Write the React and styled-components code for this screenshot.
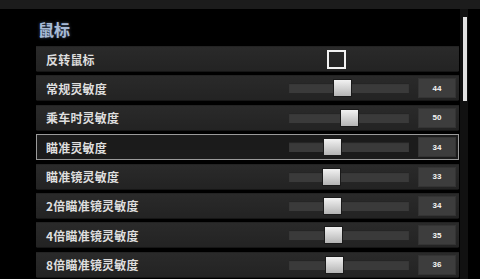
import React from "react";
import styled, { createGlobalStyle } from "styled-components";

const settings = [
  { label: "反转鼠标", type: "check" },
  { label: "常规灵敏度", value: 44 },
  { label: "乘车时灵敏度", value: 50 },
  { label: "瞄准灵敏度", value: 34, selected: true },
  { label: "瞄准镜灵敏度", value: 33 },
  { label: "2倍瞄准镜灵敏度", value: 34 },
  { label: "4倍瞄准镜灵敏度", value: 35 },
  { label: "8倍瞄准镜灵敏度", value: 36 },
];

const App = () => {
  return (
    <>
      <GlobalStyle />
      <TopBar />
      <Main>
        <Content>
          <Title>鼠标</Title>
          <List>
            {settings.map((s) => (
              <Row key={s.label} $selected={s.selected}>
                <Label>{s.label}</Label>
                {s.type === "check" ? (
                  <CheckArea>
                    <CheckBox />
                  </CheckArea>
                ) : (
                  <SliderArea>
                    <Track>
                      <Thumb style={{ left: `${(s.value / 100) * 101}px` }} />
                    </Track>
                    <ValueBox>{s.value}</ValueBox>
                  </SliderArea>
                )}
              </Row>
            ))}
          </List>
        </Content>
        <ScrollTrack>
          <ScrollThumb />
        </ScrollTrack>
      </Main>
    </>
  );
};

export default App;

const GlobalStyle = createGlobalStyle`
  html, body {
    margin: 0;
    padding: 0;
    background: #000;
    overflow: hidden;
    font-family: "Noto Sans CJK SC", "Liberation Sans", sans-serif;
  }
`;

const TopBar = styled.div`
  height: 9px;
  background: #1c1c1c;
`;

const Main = styled.div`
  display: flex;
  padding-left: 36px;
`;

const Content = styled.div`
  width: 423px;
`;

const Title = styled.div`
  padding-top: 10px;
  padding-left: 2px;
  height: 27px;
  line-height: 20px;
  font-size: 16px;
  font-weight: 700;
  color: #a8bbd6;
  text-shadow: 0 0 3px rgba(120, 150, 200, 0.6);
`;

const List = styled.div`
  display: flex;
  flex-direction: column;
  gap: 3.4px;
`;

const Row = styled.div`
  box-sizing: border-box;
  height: 26px;
  display: flex;
  align-items: center;
  padding-left: 9px;
  background: ${(p) =>
    p.$selected ? "#1b1b1b" : "linear-gradient(#2a2a2a, #232323)"};
  border: 1px solid ${(p) => (p.$selected ? "#9a9a9a" : "transparent")};
  border-bottom-color: ${(p) => (p.$selected ? "#9a9a9a" : "#161616")};
`;

const Label = styled.div`
  flex: 1;
  font-size: 12px;
  font-weight: 700;
  color: #dedede;
  letter-spacing: 0.2px;
`;

const CheckArea = styled.div`
  width: 167px;
  margin-right: 3px;
  padding-left: 39px;
  box-sizing: border-box;
`;

const CheckBox = styled.div`
  width: 19px;
  height: 19px;
  box-sizing: border-box;
  border: 2px solid #f2f2f2;
`;

const SliderArea = styled.div`
  display: flex;
  align-items: center;
  gap: 9px;
  margin-right: 2px;
`;

const Track = styled.div`
  position: relative;
  width: 120px;
  height: 10px;
  background: #3a3a3a;
  box-shadow: inset 0 1px 1px rgba(0, 0, 0, 0.4);
`;

const Thumb = styled.div`
  position: absolute;
  top: -4px;
  width: 19px;
  height: 18px;
  box-sizing: border-box;
  background: linear-gradient(#f2f2f2, #b4b4b4);
  border: 1px solid #1a1a1a;
`;

const ValueBox = styled.div`
  width: 38px;
  height: 20px;
  background: #3d3d3d;
  border: 1px solid #343434;
  box-sizing: border-box;
  display: flex;
  align-items: center;
  justify-content: center;
  font-family: "Liberation Sans", sans-serif;
  font-size: 8px;
  font-weight: 700;
  color: #f4f4f4;
`;

const ScrollTrack = styled.div`
  width: 8px;
  height: 270px;
  margin-left: 1px;
  background: #111;
  padding-top: 8px;
  box-sizing: border-box;
`;

const ScrollThumb = styled.div`
  width: 4px;
  height: 84px;
  margin-left: 3px;
  background: #e2e2e2;
`;
